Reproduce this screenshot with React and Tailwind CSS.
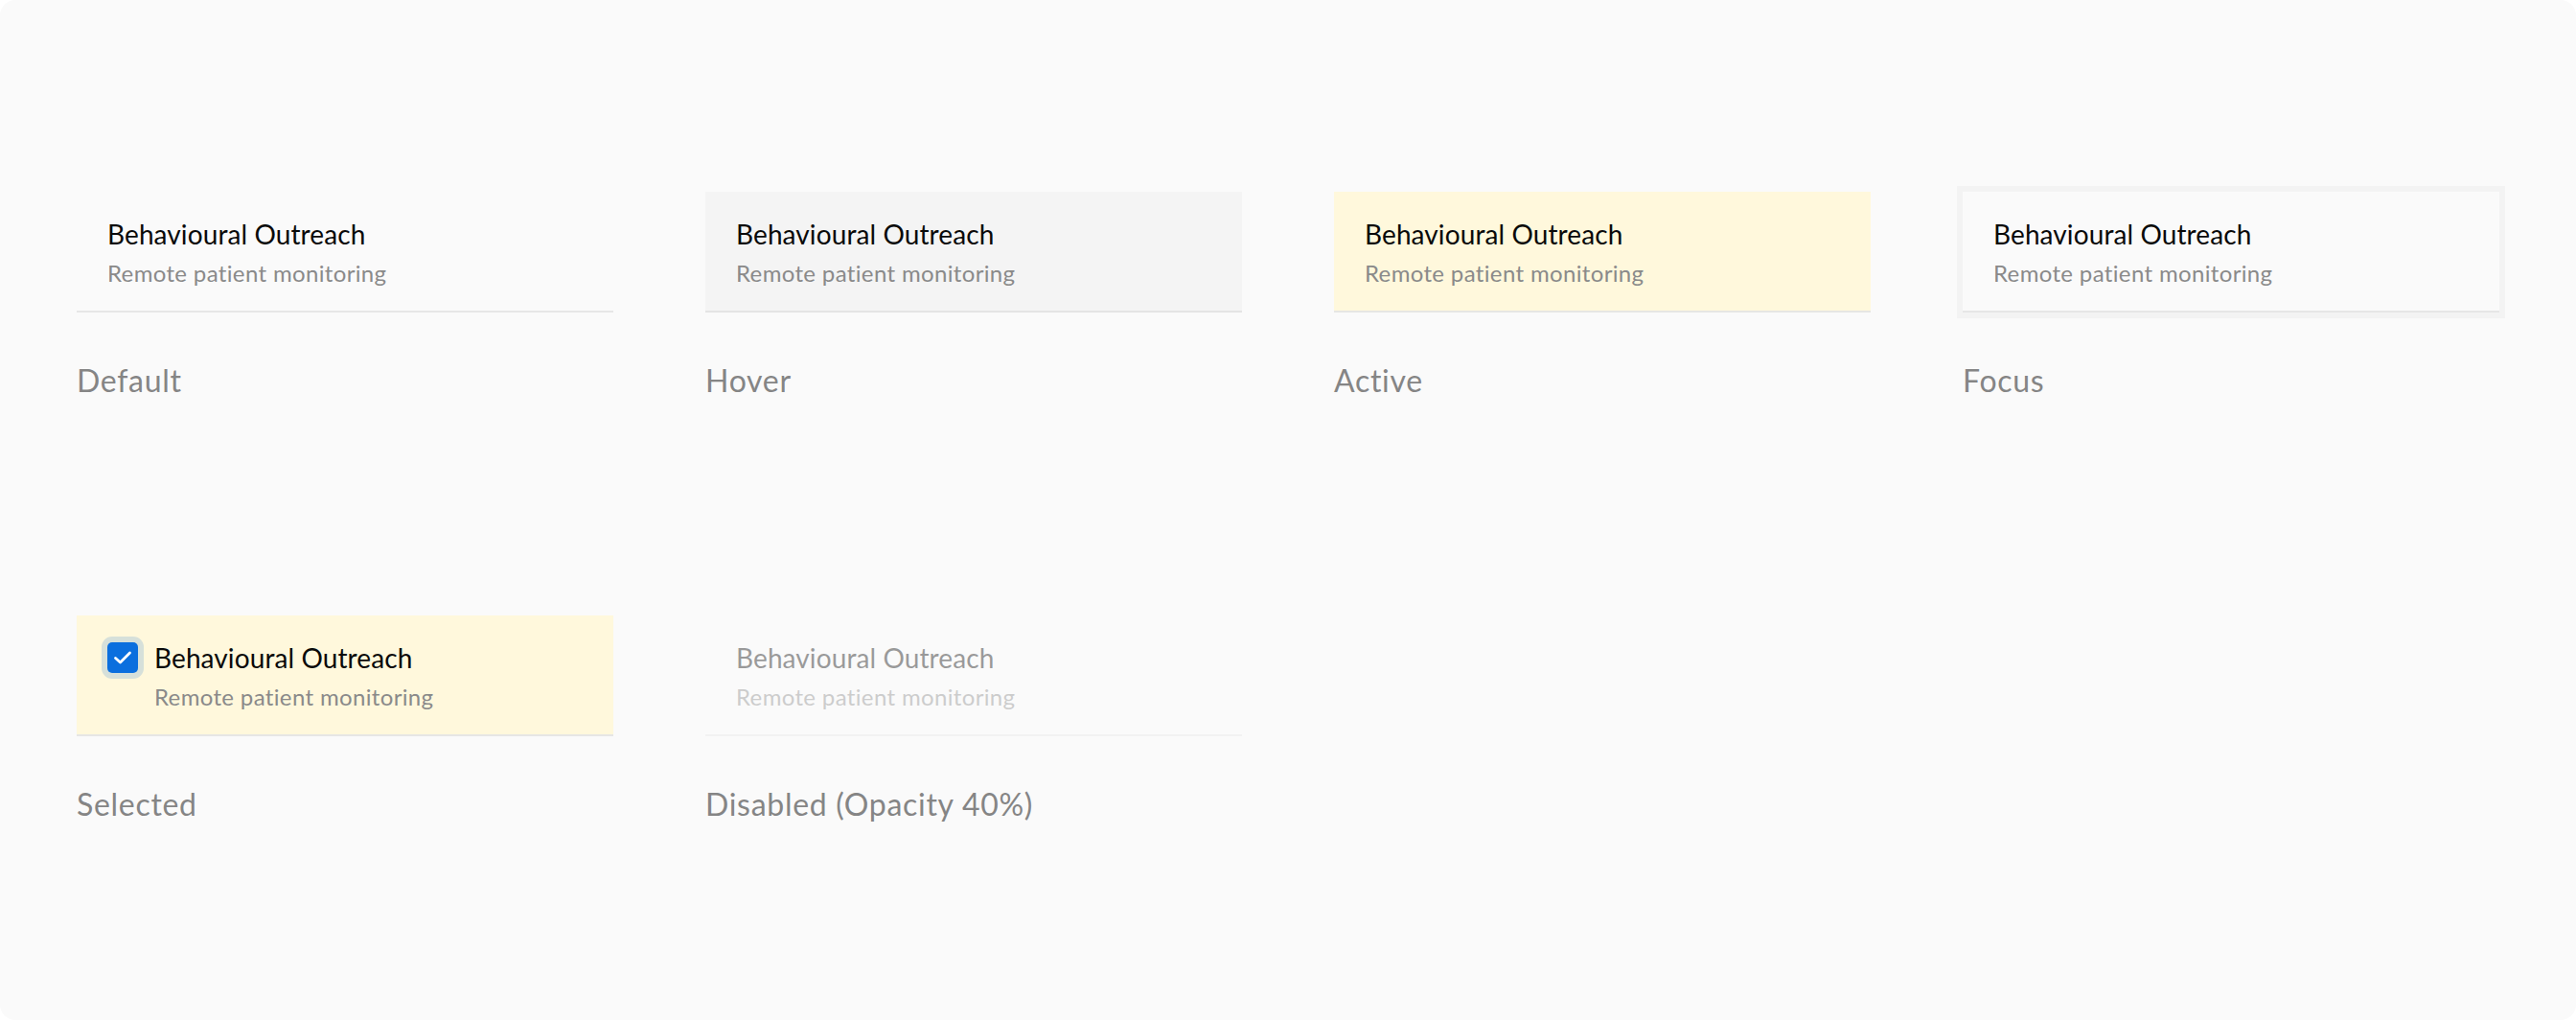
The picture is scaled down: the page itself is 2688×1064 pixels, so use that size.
import React from "react";

function Check() {
  return (
    <span className="mr-[17px] flex h-[32px] w-[32px] shrink-0 items-center justify-center rounded-[5px] bg-[#0b6fde] shadow-[0_0_0_6px_#d6e0da]">
      <svg width="32" height="32" viewBox="0 0 32 32" fill="none">
        <path d="M8.5 16.5 L13.5 21 L23.5 11" stroke="#ffffff" strokeWidth="2.8" strokeLinecap="round" strokeLinejoin="round" />
      </svg>
    </span>
  );
}

function Item({ variant }) {
  const base = "w-[560px] border-b-2 pl-[32px] pr-[32px] pt-[26px] pb-[23px]";
  let cls = base + " border-[#e6e6e6]";
  if (variant === "hover") cls = base + " border-[#e4e4e4] bg-[#f4f4f4]";
  if (variant === "active" || variant === "selected") cls = base + " border-[#e6e6e4] bg-[#fff8dc]";
  if (variant === "focus") cls = base + " border-[#e6e6e6] bg-[#fafafa] shadow-[0_0_0_6px_#f3f3f3]";
  if (variant === "disabled") cls = base + " border-[#e6e6e6] opacity-40";
  const withCheck = variant === "selected";
  return (
    <div className={cls}>
      <div className="flex items-center">
        {withCheck && <Check />}
        <div className="text-[28px] leading-[36px] tracking-[0.1px] text-[#0a0a0a]">Behavioural Outreach</div>
      </div>
      <div className={"mt-[7px] text-[24px] leading-[32px] tracking-[0.35px] text-[#8a8a8a]" + (withCheck ? " pl-[49px]" : "")}>
        Remote patient monitoring
      </div>
    </div>
  );
}

function Cell({ variant, label }) {
  return (
    <div className="flex flex-col">
      <Item variant={variant} />
      <div className="mt-[51px] text-[32px] leading-[40px] tracking-[0.7px] text-[#858585]">{label}</div>
    </div>
  );
}

export default function App() {
  return (
    <div className="min-h-[1064px] w-[2688px] bg-white" style={{ fontFamily: "Lato, 'Noto Sans', sans-serif" }}>
      <div className="flex h-[1064px] w-[2688px] flex-col gap-[225px] rounded-[16px] bg-[#fafafa] px-[80px] pt-[200px]">
        <div className="grid grid-cols-[560px_560px_560px_560px] gap-x-[96px]">
          <Cell variant="default" label="Default" />
          <Cell variant="hover" label="Hover" />
          <Cell variant="active" label="Active" />
          <Cell variant="focus" label="Focus" />
        </div>
        <div className="grid grid-cols-[560px_560px_560px_560px] gap-x-[96px]">
          <Cell variant="selected" label="Selected" />
          <Cell variant="disabled" label="Disabled (Opacity 40%)" />
        </div>
      </div>
    </div>
  );
}
